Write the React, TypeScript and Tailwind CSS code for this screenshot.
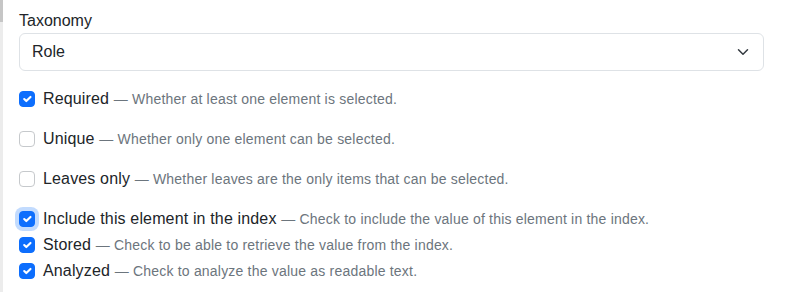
import React from "react";

type Opt = {
  label: string;
  help: string;
  checked: boolean;
  focused?: boolean;
};

const spaced: Opt[] = [
  { label: "Required", help: "Whether at least one element is selected.", checked: true },
  { label: "Unique", help: "Whether only one element can be selected.", checked: false },
  { label: "Leaves only", help: "Whether leaves are the only items that can be selected.", checked: false },
];

const tight: Opt[] = [
  {
    label: "Include this element in the index",
    help: "Check to include the value of this element in the index.",
    checked: true,
    focused: true,
  },
  { label: "Stored", help: "Check to be able to retrieve the value from the index.", checked: true },
  { label: "Analyzed", help: "Check to analyze the value as readable text.", checked: true },
];

function CheckBox({ checked, focused }: { checked: boolean; focused?: boolean }) {
  return (
    <span
      className={
        "mt-1 flex h-4 w-4 shrink-0 items-center justify-center rounded-[4px] border " +
        (checked ? "border-[#0d6efd] bg-[#0d6efd] " : "border-[#c6c9cc] bg-white ") +
        (focused ? "shadow-[0_0_0_4px_rgba(13,110,253,0.25)]" : "")
      }
    >
      {checked && (
        <svg viewBox="0 0 20 20" className="h-4 w-4" fill="none">
          <path d="m6 10 3 3 6-6" stroke="#fff" strokeWidth="3" strokeLinecap="round" strokeLinejoin="round" />
        </svg>
      )}
    </span>
  );
}

function CheckRow({ opt, className }: { opt: Opt; className: string }) {
  return (
    <div className={"flex items-start gap-2 " + className}>
      <CheckBox checked={opt.checked} focused={opt.focused} />
      <div className="text-[16px] leading-6 tracking-[0.15px] text-[#212529]">
        {opt.label}{" "}
        <span className="text-[14px] tracking-[0.2px] text-[#6c757d]">— {opt.help}</span>
      </div>
    </div>
  );
}

export default function App() {
  return (
    <div
      className="flex h-[292px] w-[810px] bg-white"
      style={{ fontFamily: '"Liberation Sans", Arial, sans-serif' }}
    >
      <div className="w-[3px] shrink-0 bg-[#ececec]">
        <div className="h-[22px] bg-[#c6c6c6]" />
      </div>
      <div className="flex-1 pl-4 pr-[46px] pt-[9px]">
        <div className="text-[16px] leading-6 text-[#212529]">Taxonomy</div>
        <div className="flex h-[38px] items-center justify-between rounded-[6px] border border-[#dee2e6] pl-3 pr-3">
          <span className="text-[16px] text-[#212529]">Role</span>
          <svg viewBox="0 0 16 16" className="h-3 w-4" fill="none">
            <path d="m2 5 6 6 6-6" stroke="#343a40" strokeWidth="2" strokeLinecap="round" strokeLinejoin="round" />
          </svg>
        </div>
        <div className="mt-4 flex flex-col">
          {spaced.map((o) => (
            <CheckRow key={o.label} opt={o} className="mb-4" />
          ))}
          {tight.map((o) => (
            <CheckRow key={o.label} opt={o} className="mb-[2px]" />
          ))}
        </div>
      </div>
    </div>
  );
}
